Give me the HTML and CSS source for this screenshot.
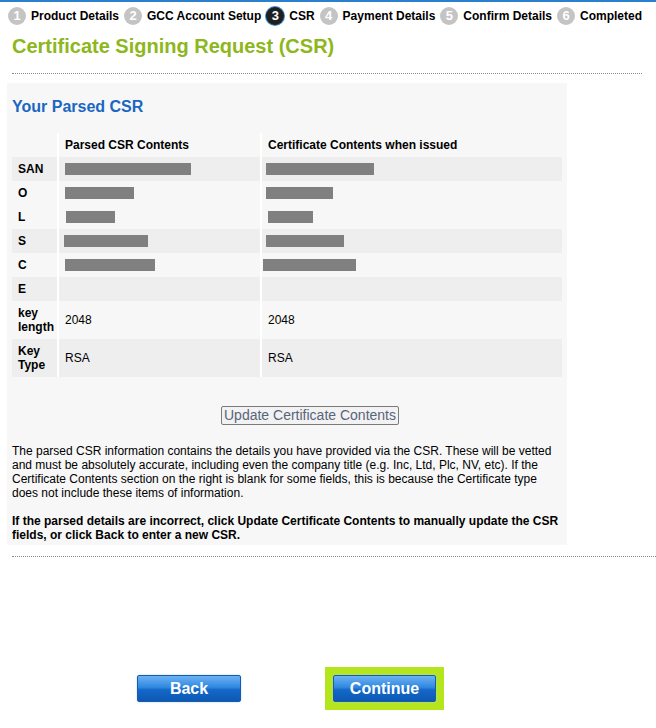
FILE: index.html
```html
<!DOCTYPE html>
<html lang="en">
<head>
    <meta charset="UTF-8">
    <meta name="viewport" content="width=device-width, initial-scale=1.0">
    <title>Certificate Signing Request (CSR)</title>
    <link rel="stylesheet" href="styles.css">
</head>
<body>

<div class="top-bar"></div>

<div class="steps">
    <span class="step-num">1</span><span class="step-label">Product Details</span>
    <span class="step-num">2</span><span class="step-label">GCC Account Setup</span>
    <span class="step-num active">3</span><span class="step-label">CSR</span>
    <span class="step-num">4</span><span class="step-label">Payment Details</span>
    <span class="step-num">5</span><span class="step-label">Confirm Details</span>
    <span class="step-num">6</span><span class="step-label">Completed</span>
</div>

<h1 class="page-title">Certificate Signing Request (CSR)</h1>
<div class="dots dots-top"></div>

<div class="panel">
    <h2 class="panel-title">Your Parsed CSR</h2>

    <table class="csr-table">
        <colgroup>
            <col class="col-label">
            <col class="col-parsed">
            <col class="col-issued">
        </colgroup>
        <tr class="head">
            <th></th>
            <th>Parsed CSR Contents</th>
            <th>Certificate Contents when issued</th>
        </tr>
        <tr class="dark">
            <th>SAN</th>
            <td><span class="redact" style="width:126px"></span></td>
            <td><span class="redact" style="width:108px; margin-left:-2px"></span></td>
        </tr>
        <tr>
            <th>O</th>
            <td><span class="redact" style="width:69px"></span></td>
            <td><span class="redact" style="width:67px; margin-left:-2px"></span></td>
        </tr>
        <tr>
            <th>L</th>
            <td><span class="redact" style="width:49px; margin-left:1px"></span></td>
            <td><span class="redact" style="width:45px"></span></td>
        </tr>
        <tr class="dark">
            <th>S</th>
            <td><span class="redact" style="width:84px; margin-left:-1px"></span></td>
            <td><span class="redact" style="width:78px; margin-left:-2px"></span></td>
        </tr>
        <tr>
            <th>C</th>
            <td><span class="redact" style="width:90px"></span></td>
            <td><span class="redact" style="width:93px; margin-left:-5px"></span></td>
        </tr>
        <tr class="dark">
            <th>E</th>
            <td></td>
            <td></td>
        </tr>
        <tr>
            <th>key length</th>
            <td>2048</td>
            <td>2048</td>
        </tr>
        <tr class="dark">
            <th>Key Type</th>
            <td>RSA</td>
            <td>RSA</td>
        </tr>
    </table>

    <div class="update-row">
        <button class="update-btn">Update Certificate Contents</button>
    </div>

    <p class="note">The parsed CSR information contains the details you have provided via the CSR. These will be vetted and must be absolutely accurate, including even the company title (e.g. Inc, Ltd, Plc, NV, etc). If the Certificate Contents section on the right is blank for some fields, this is because the Certificate type does not include these items of information.</p>

    <p class="note note-bold">If the parsed details are incorrect, click Update Certificate Contents to manually update the CSR fields, or click Back to enter a new CSR.</p>
</div>

<div class="dots dots-bottom"></div>

<div class="actions">
    <button class="blue-btn">Back</button>
    <div class="focus-frame">
        <button class="blue-btn">Continue</button>
    </div>
</div>

</body>
</html>
```

FILE: styles.css
```css
body {
    font-family: "Liberation Sans", Arial, sans-serif;
    font-size: 12px;
    color: #000;
    margin: 0;
    padding: 0;
    background: #fff;
}
.top-bar {
    height: 0;
    border-top: 2px solid #2a7fcf;
}
.steps {
    display: flex;
    align-items: center;
    padding: 5px 0 0 8px;
    height: 18px;
}
.step-num {
    width: 18px;
    height: 18px;
    border-radius: 50%;
    background-color: #c4c4c4;
    color: #fff;
    font-weight: bold;
    font-size: 13px;
    line-height: 18px;
    text-align: center;
    margin-right: 5px;
}
.step-num.active {
    background-color: #1f1f1f;
    box-shadow: 0 0 0 1px #3b8bd4;
}
.step-label {
    font-weight: bold;
    font-size: 12px;
    margin-right: 5px;
}
.page-title {
    font-size: 20px;
    line-height: 23px;
    color: #8db71c;
    margin: 10px 0 0 12px;
}
.dots {
    height: 0;
    border-top: 1px dotted #8a8a8a;
    margin-left: 12px;
}
.dots-top {
    margin-top: 15px;
    margin-right: 14px;
}
.dots-bottom {
    margin-top: 11px;
}
.panel {
    width: 550px;
    margin: 9px 0 0 7px;
    padding: 0 5px 3px 5px;
    background-color: #f7f7f7;
}
.panel-title {
    font-size: 16px;
    line-height: 18px;
    color: #1a66c2;
    margin: 0;
    padding: 15px 0 17px 0;
}
.csr-table {
    width: 550px;
    border-collapse: collapse;
    table-layout: fixed;
}
.col-label {
    width: 46px;
}
.col-parsed {
    width: 203px;
}
.col-issued {
    width: 301px;
}
.csr-table th,
.csr-table td {
    padding: 5px 5px 5px 6px;
    line-height: 14px;
    text-align: left;
    vertical-align: middle;
    font-size: 12px;
}
.csr-table th {
    font-weight: bold;
}
.csr-table td,
.csr-table .head th {
    border-left: 2px solid #fff;
}
.csr-table .head th:first-child {
    border-left: none;
}
.csr-table .dark {
    background-color: #eeeeee;
}
.redact {
    display: block;
    height: 12px;
    margin: 1px 0;
    background-color: #808080;
}
.update-row {
    text-align: center;
    padding: 29px 0 0 46px;
}
.update-btn {
    font-family: "Liberation Sans", Arial, sans-serif;
    font-size: 14px;
    line-height: 15px;
    color: #59647a;
    background-color: #f2f2f2;
    border: 1px solid #7a7a7a;
    border-radius: 2px;
    padding: 1px 2px;
}
.note {
    margin: 19px 0 0 0;
    line-height: 14px;
}
.note-bold {
    font-weight: bold;
    margin-top: 14px;
}
.actions {
    display: flex;
    align-items: center;
    margin-top: 110px;
    padding-left: 137px;
}
.blue-btn {
    width: 104px;
    height: 27px;
    font-family: "Liberation Sans", Arial, sans-serif;
    font-size: 16px;
    font-weight: bold;
    color: #fff;
    border: 1px solid #1a5aa8;
    border-radius: 2px;
    background: linear-gradient(#6cb2f4, #3088e0 45%, #1468c8 55%, #0d58b4);
    box-shadow: 0 0 2px #9fd0ff;
    padding: 0;
}
.focus-frame {
    margin-left: 84px;
    padding: 8px;
    background-color: #b5e61d;
}
.focus-frame .blue-btn {
    width: 103px;
}
```
